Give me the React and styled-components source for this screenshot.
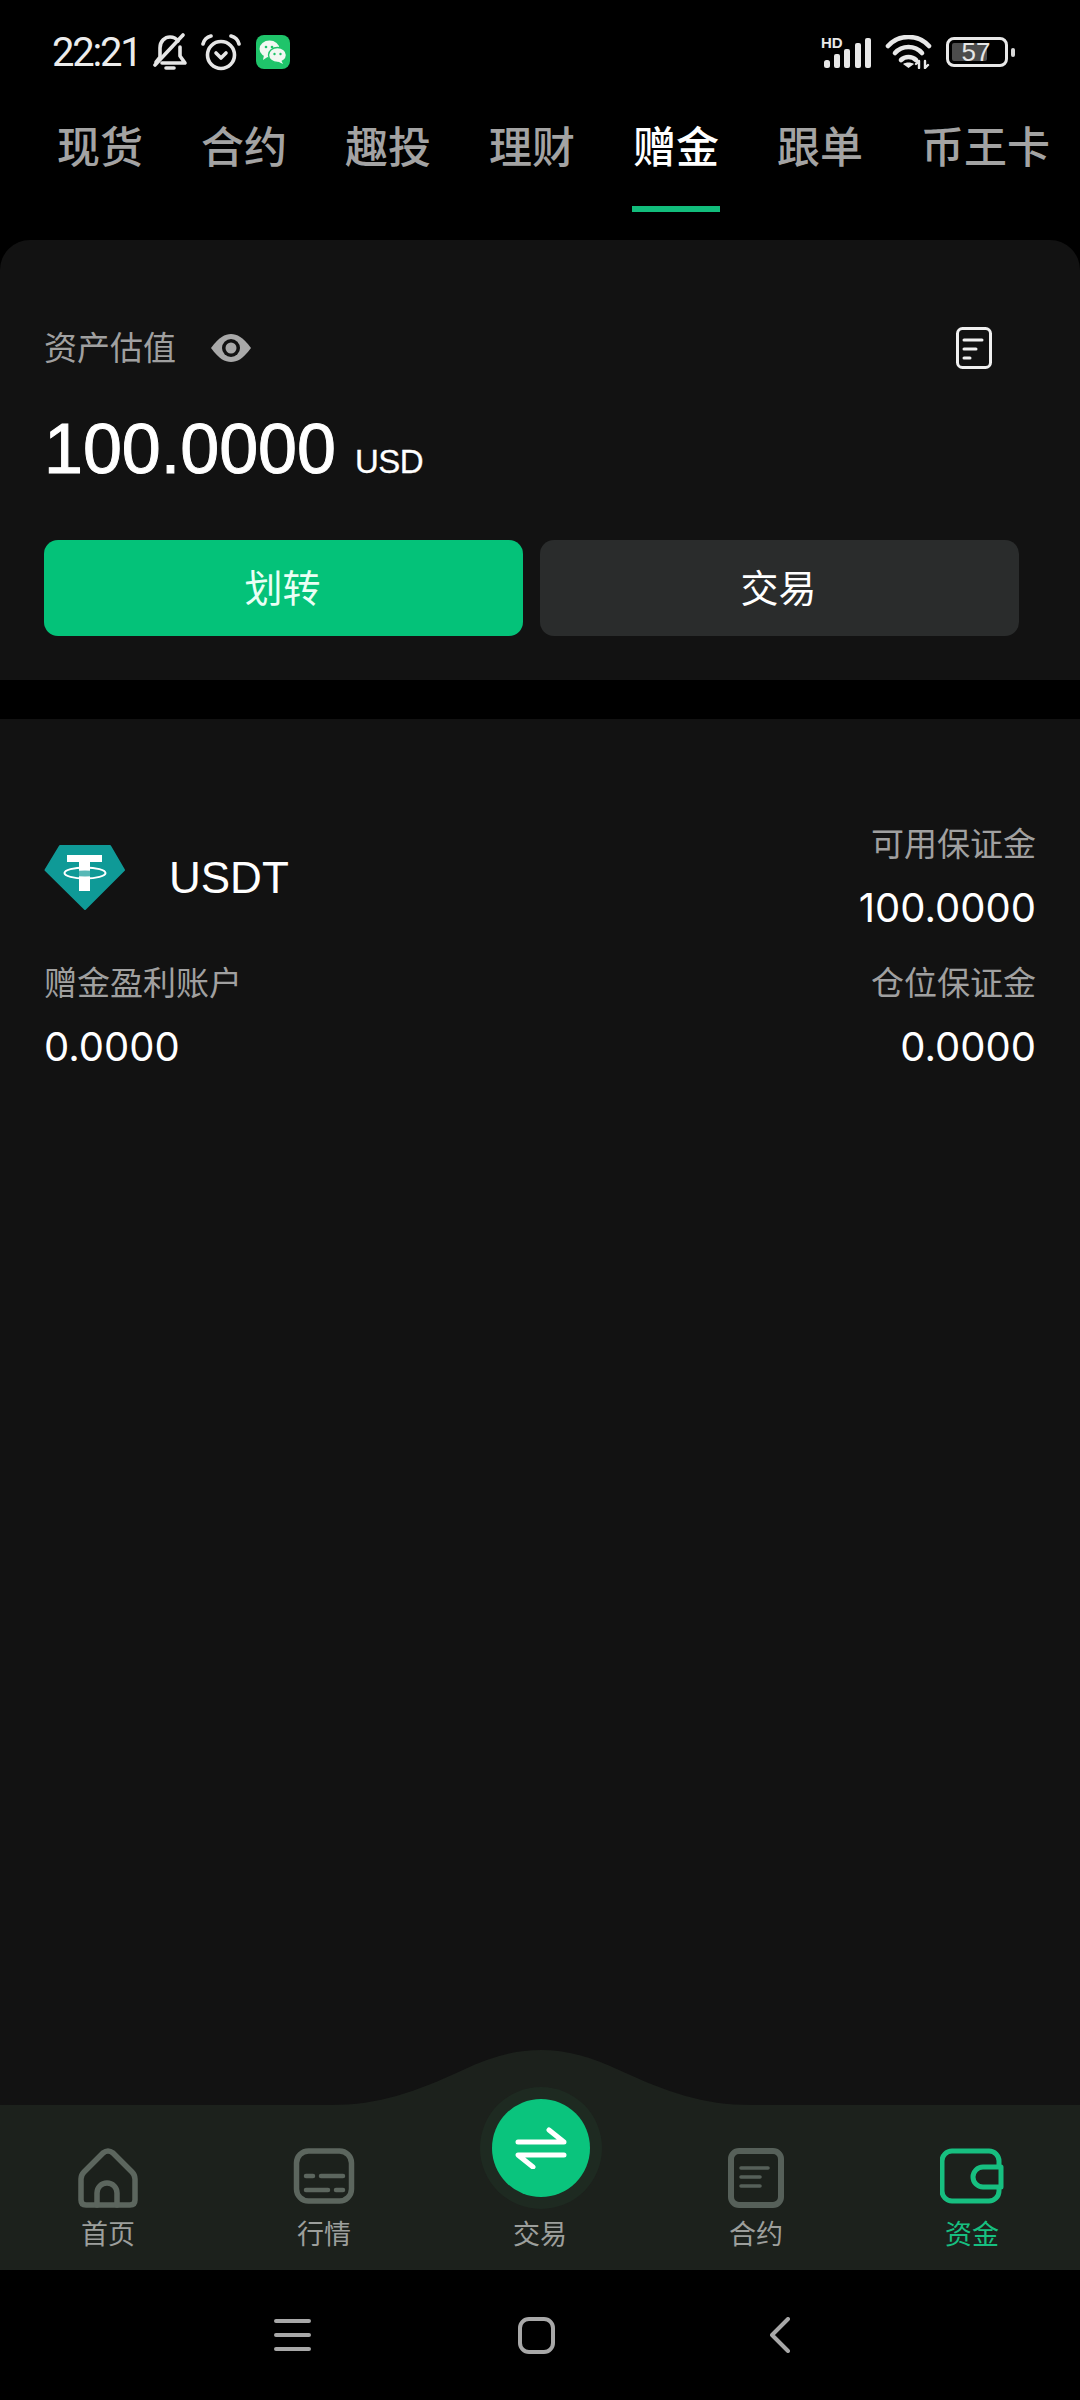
import React from 'react'
import styled, { createGlobalStyle } from 'styled-components'

const cjk = `"Noto Sans CJK SC", "Noto Sans", sans-serif`
const latin = `"Liberation Sans", Arial, sans-serif`

const GlobalStyle = createGlobalStyle`
  html, body {
    margin: 0;
    padding: 0;
    background: #000;
  }
  * { box-sizing: border-box; }
`

const Page = styled.div`
  width: 1080px;
  height: 2400px;
  display: flex;
  flex-direction: column;
  background: #000;
  overflow: hidden;
  font-family: ${cjk};
`

const StatusBar = styled.div`
  height: 104px;
  flex: none;
  display: flex;
  align-items: center;
  justify-content: space-between;
  padding: 0 65px 0 52px;
`

const StatusGroup = styled.div`
  display: flex;
  align-items: center;
  gap: ${p => p.$gap}px;
`

const Time = styled.span`
  flex: none;
  font-family: Roboto, sans-serif;
  font-size: 40px;
  letter-spacing: -2.2px;
  color: #ececec;
  width: 87px;
  white-space: nowrap;
`

const WechatBadge = styled.div`
  width: 34px;
  height: 34px;
  border-radius: 8px;
  background: #1fc46a;
  display: flex;
  align-items: center;
  justify-content: center;
  margin-left: 2px;
`

const Battery = styled.div`
  position: relative;
  width: 62px;
  height: 30px;
  border: 3px solid #e8e8e8;
  border-radius: 8px;
  margin-right: 7px;
  display: flex;
  align-items: center;
  justify-content: center;
  font-family: ${latin};
  font-size: 26px;
  line-height: 24px;
  color: #e6e6e6;
  &::before {
    content: '';
    position: absolute;
    left: 3px;
    top: 3px;
    bottom: 3px;
    width: 35px;
    border-radius: 2px;
    background: #4c4c4c;
  }
  &::after {
    content: '';
    position: absolute;
    right: -10px;
    top: 8px;
    width: 4px;
    height: 9px;
    border-radius: 2px;
    background: #d8d8d8;
  }
`

const BatteryLevel = styled.span`
  position: relative;
  z-index: 1;
  margin-right: 2px;
`

const TabRow = styled.div`
  height: 108px;
  flex: none;
  display: flex;
  gap: 56px;
  padding-left: 56px;
`

const Tab = styled.div`
  position: relative;
  padding: 0 1px;
  height: 108px;
  line-height: 80px;
  font-size: 43px;
  white-space: nowrap;
  font-weight: 500;
  color: ${p => (p.$active ? '#fff' : '#a3a3a3')};
  ${p => p.$active && `
    &::after {
      content: '';
      position: absolute;
      left: 0;
      right: 0;
      bottom: 0;
      height: 6px;
      background: #12bd7c;
    }
  `}
`

const AssetPanel = styled.section`
  flex: none;
  margin-top: 28px;
  background: #121212;
  border-radius: 30px 30px 0 0;
  padding: 87px 61px 44px 44px;
`

const AssetHead = styled.div`
  height: 41px;
  display: flex;
  align-items: center;
`

const MutedLabel = styled.span`
  display: block;
  font-size: 33px;
  line-height: 40px;
  padding-bottom: 4px;
  color: #a0a0a0;
  white-space: nowrap;
`

const EyeWrap = styled.span`
  display: flex;
  margin-left: 35px;
`

const DocWrap = styled.span`
  display: flex;
  margin-left: auto;
  margin-right: 27px;
`

const AmountRow = styled.div`
  margin-top: 46px;
  display: flex;
  align-items: baseline;
  gap: 19px;
  color: #fff;
  font-family: ${latin};
`

const Amount = styled.span`
  font-size: 70px;
  line-height: 70px;
  -webkit-text-stroke: 1px #fff;
`

const Unit = styled.span`
  font-size: 33px;
  letter-spacing: -0.5px;
  -webkit-text-stroke: 0.3px #fff;
`

const ButtonRow = styled.div`
  margin-top: 56px;
  display: flex;
  gap: 17px;
`

const ActionButton = styled.button`
  flex: 1;
  height: 96px;
  border: 0;
  padding: 0 2px 5px 0;
  border-radius: 14px;
  background: ${p => (p.$primary ? '#04c279' : '#2a2c2c')};
  color: ${p => (p.$primary ? '#eafff5' : '#fff')};
  font-family: ${cjk};
  font-size: 38px;
`

const AccountPanel = styled.section`
  flex: 1;
  margin-top: 39px;
  background: #121212;
  padding: 103px 44px 0;
  display: grid;
  grid-template-columns: 1fr 1fr;
  grid-auto-rows: min-content;
  row-gap: 31px;
`

const CoinCell = styled.div`
  display: flex;
  align-items: center;
  gap: 43px;
  padding-top: 3px;
`

const CoinName = styled.span`
  font-family: ${latin};
  font-size: 44px;
  color: #fff;
`

const Stat = styled.div`
  display: flex;
  flex-direction: column;
  gap: 20px;
  align-items: ${p => (p.$right ? 'flex-end' : 'flex-start')};
`

const StatValue = styled.span`
  font-family: Inter, "Noto Sans", sans-serif;
  font-size: 40px;
  line-height: 44px;
  color: #fff;
`

const TabBar = styled.nav`
  position: relative;
  flex: none;
  height: 165px;
  padding-top: 43px;
  background: #1c211c;
  display: grid;
  grid-template-columns: repeat(5, 216px);
`

const Hump = styled.svg`
  position: absolute;
  left: 50%;
  top: -55px;
  margin-left: -210px;
`

const NavItem = styled.div`
  display: flex;
  flex-direction: column;
  align-items: center;
  font-size: 27px;
  line-height: 36px;
  color: ${p => (p.$active ? '#17bf80' : '#9c9f9c')};
`

const NavIconSlot = styled.div`
  position: relative;
  width: 64px;
  height: 60px;
  margin-bottom: 7px;
  display: flex;
  justify-content: center;
`

const TradeRing = styled.div`
  position: absolute;
  left: 50%;
  top: -61px;
  margin-left: -60px;
  width: 122px;
  height: 122px;
  border-radius: 50%;
  background: #1e2a21;
  display: flex;
  align-items: center;
  justify-content: center;
`

const TradeCircle = styled.div`
  width: 98px;
  height: 98px;
  border-radius: 50%;
  background: #0ac47d;
  display: flex;
  align-items: center;
  justify-content: center;
`

const SystemNav = styled.div`
  height: 130px;
  flex: none;
  padding-left: 170px;
  display: grid;
  grid-template-columns: repeat(3, 244px);
  align-items: center;
  justify-items: center;
  background: #000;
`

const BellOff = () => (
  <svg width="36" height="38" viewBox="0 0 36 38" fill="none" stroke="#e6e6e6" strokeWidth="3.6" strokeLinecap="round" strokeLinejoin="round">
    <path d="M4 29 L8 24 V15 C8 8 13 4 18 4 C21 4 24 5 26 8" />
    <path d="M28 14 V23 L33 30 H10" />
    <path d="M31 2 L3 32" />
    <path d="M14 35 H22" />
  </svg>
)

const AlarmClock = () => (
  <svg width="40" height="37" viewBox="0 0 40 37" fill="none" stroke="#e6e6e6" strokeWidth="3.6" strokeLinecap="round" strokeLinejoin="round">
    <circle cx="20" cy="21" r="13.5" />
    <path d="M2 10 C3 6 6 3 10 2" />
    <path d="M38 10 C37 6 34 3 30 2" />
    <path d="M15 19 L20 24 L25 19" />
  </svg>
)

const WechatGlyph = () => (
  <svg width="28" height="26" viewBox="0 0 28 26">
    <ellipse cx="10.5" cy="10" rx="10" ry="8.5" fill="#f2f8f2" />
    <path d="M5 16 L4 21 L10 17Z" fill="#f2f8f2" />
    <ellipse cx="18.5" cy="16" rx="9" ry="7.5" fill="#f2f8f2" stroke="#1fc46a" strokeWidth="1.4" />
    <path d="M22 21 L24 25 L18 22Z" fill="#f2f8f2" />
    <circle cx="7" cy="8" r="1.3" fill="#1fc46a" />
    <circle cx="13" cy="8" r="1.3" fill="#1fc46a" />
    <circle cx="15.5" cy="15" r="1.2" fill="#1fc46a" />
    <circle cx="21.5" cy="15" r="1.2" fill="#1fc46a" />
  </svg>
)

const Signal = () => (
  <svg width="50" height="36" viewBox="0 -2 50 36">
    <text x="0" y="12" fontFamily="Liberation Sans" fontWeight="700" fontSize="15" fill="#e8e8e8">HD</text>
    <g fill="#e8e8e8">
      <rect x="3" y="24" width="6" height="8" rx="2.5" />
      <rect x="13" y="18" width="6" height="14" rx="2" />
      <rect x="23" y="13" width="6" height="19" rx="2" />
      <rect x="34" y="7" width="6" height="25" rx="2" />
      <rect x="44" y="2" width="6" height="30" rx="2" />
    </g>
  </svg>
)

const Wifi = () => (
  <svg width="47" height="34" viewBox="0 0 47 34" fill="none" stroke="#e8e8e8" strokeWidth="4.6" strokeLinecap="round">
    <path d="M3 11 C14 -1 33 -1 44 11" />
    <path d="M10 18 C17 10 30 10 37 18" />
    <path d="M16 25 C20 21 27 21 31 25" />
    <path d="M23.5 33 L18 29 C21 27 26 27 29 29Z" fill="#e8e8e8" stroke="none" />
    <path d="M34 33 V26 M31 29 L34 26" strokeWidth="2.4" />
    <path d="M40 26 V33 M43 30 L40 33" strokeWidth="2.4" />
  </svg>
)

const Eye = () => (
  <svg width="40" height="28" viewBox="0 0 40 28">
    <path d="M0 14 C8 3 14 0 20 0 C26 0 32 3 40 14 C32 25 26 28 20 28 C14 28 8 25 0 14Z" fill="#a9a9a9" />
    <circle cx="20" cy="14" r="9" fill="#121212" />
    <circle cx="20" cy="14" r="5.5" fill="#a9a9a9" />
  </svg>
)

const DocIcon = () => (
  <svg width="36" height="42" viewBox="0 0 36 42" fill="none" stroke="#f0f0f0" strokeLinecap="round">
    <rect x="1.5" y="1.5" width="33" height="39" rx="5" strokeWidth="3" />
    <path d="M8 13 H26 M8 22 H20 M8 31 H14" strokeWidth="3" />
  </svg>
)

const TetherLogo = () => (
  <svg width="82" height="66" viewBox="0 0 82 66">
    <path d="M16 1 H66 L80 25 L41 64 L1.5 25Z" fill="#0f9a97" stroke="#0f9a97" strokeWidth="2" strokeLinejoin="round" />
    <path d="M23 10 H58 V17 H46 V46 H35 V17 H23Z" fill="#fff" />
    <ellipse cx="41" cy="28" rx="20.5" ry="5.5" fill="none" stroke="#fff" strokeWidth="2" />
    <ellipse cx="41" cy="28.5" rx="17" ry="3" fill="#0f9a97" opacity="0.7" />
  </svg>
)

const HomeIcon = () => (
  <svg width="60" height="60" viewBox="0 0 60 60" fill="none" stroke="#5c665e" strokeWidth="5.5" strokeLinejoin="round" strokeLinecap="round">
    <path d="M25 5 Q30 1 35 5 L54 24 Q57 27 57 31 V52 Q57 57 52 57 H8 Q3 57 3 52 V31 Q3 27 6 24Z" />
    <path d="M19 57 V45 A10 10 0 0 1 39 45 V57" />
  </svg>
)

const MarketIcon = () => (
  <svg width="62" height="56" viewBox="0 0 62 56" fill="none" stroke="#5c665e" strokeLinecap="round">
    <rect x="3.5" y="3" width="55" height="50" rx="12" strokeWidth="5.5" />
    <path d="M13 28 H20 M28 28 H50 M13 42 H35 M43 42 H50" strokeWidth="4.5" />
  </svg>
)

const ContractIcon = () => (
  <svg width="56" height="60" viewBox="0 0 56 60" fill="none" stroke="#566059" strokeLinecap="round">
    <rect x="3" y="3" width="50" height="54" rx="8" strokeWidth="6" />
    <path d="M13 20 H40 M13 29 H32 M13 38 H32" strokeWidth="3.6" />
  </svg>
)

const WalletIcon = () => (
  <svg width="64" height="56" viewBox="1 0 64 56" fill="none" stroke="#17bf80" strokeWidth="5" strokeLinejoin="round">
    <path d="M60 19 V13 A10 10 0 0 0 50 3 H13 A10 10 0 0 0 3 13 V43 A10 10 0 0 0 13 53 H50 A10 10 0 0 0 60 43 V39" />
    <path d="M62 19 H44 A10 10 0 0 0 44 39 H62Z" />
  </svg>
)

const TradeArrows = () => (
  <svg width="52" height="42" viewBox="0 0 52 42" fill="none" stroke="#fff" strokeWidth="5" strokeLinecap="round" strokeLinejoin="round">
    <path d="M3 15 H49 L34 3" />
    <path d="M49 28 H3 L18 40" />
  </svg>
)

const MenuIcon = () => (
  <svg width="37" height="34" viewBox="0 0 37 34" stroke="#a8a8a8" strokeWidth="4" strokeLinecap="round">
    <path d="M2 3 H35 M2 17 H35 M2 31 H35" />
  </svg>
)

const SquareIcon = () => (
  <svg width="37" height="37" viewBox="0 0 37 37" fill="none" stroke="#a8a8a8" strokeWidth="4">
    <rect x="2" y="2" width="33" height="33" rx="9" />
  </svg>
)

const BackIcon = () => (
  <svg width="20" height="36" viewBox="0 0 20 36" fill="none" stroke="#a8a8a8" strokeWidth="4" strokeLinecap="round" strokeLinejoin="round">
    <path d="M18 2 L2 18 L18 34" />
  </svg>
)

const tabs = ['现货', '合约', '趣投', '理财', '赠金', '跟单', '币王卡']

const navItems = [
  { label: '首页', icon: <HomeIcon /> },
  { label: '行情', icon: <MarketIcon /> },
  {
    label: '交易',
    icon: (
      <TradeRing>
        <TradeCircle>
          <TradeArrows />
        </TradeCircle>
      </TradeRing>
    ),
  },
  { label: '合约', icon: <ContractIcon /> },
  { label: '资金', icon: <WalletIcon />, active: true },
]

export default function App() {
  return (
    <Page>
      <GlobalStyle />
      <StatusBar>
        <StatusGroup $gap={13}>
          <Time>22:21</Time>
          <BellOff />
          <AlarmClock />
          <WechatBadge>
            <WechatGlyph />
          </WechatBadge>
        </StatusGroup>
        <StatusGroup $gap={14}>
          <Signal />
          <Wifi />
          <Battery>
            <BatteryLevel>57</BatteryLevel>
          </Battery>
        </StatusGroup>
      </StatusBar>

      <TabRow>
        {tabs.map(t => (
          <Tab key={t} $active={t === '赠金'}>{t}</Tab>
        ))}
      </TabRow>

      <AssetPanel>
        <AssetHead>
          <MutedLabel>资产估值</MutedLabel>
          <EyeWrap><Eye /></EyeWrap>
          <DocWrap><DocIcon /></DocWrap>
        </AssetHead>
        <AmountRow>
          <Amount>100.0000</Amount>
          <Unit>USD</Unit>
        </AmountRow>
        <ButtonRow>
          <ActionButton $primary>划转</ActionButton>
          <ActionButton>交易</ActionButton>
        </ButtonRow>
      </AssetPanel>

      <AccountPanel>
        <CoinCell>
          <TetherLogo />
          <CoinName>USDT</CoinName>
        </CoinCell>
        <Stat $right>
          <MutedLabel>可用保证金</MutedLabel>
          <StatValue>100.0000</StatValue>
        </Stat>
        <Stat>
          <MutedLabel>赠金盈利账户</MutedLabel>
          <StatValue>0.0000</StatValue>
        </Stat>
        <Stat $right>
          <MutedLabel>仓位保证金</MutedLabel>
          <StatValue>0.0000</StatValue>
        </Stat>
      </AccountPanel>

      <TabBar>
        <Hump width="422" height="56" viewBox="0 0 422 56">
          <path d="M0 56 V55 C50 55 85 42 133 20 C160 7 185 0 211 0 C237 0 262 7 289 20 C337 42 372 55 422 55 V56Z" fill="#1c211c" />
        </Hump>
        {navItems.map(item => (
          <NavItem key={item.label} $active={item.active}>
            <NavIconSlot>{item.icon}</NavIconSlot>
            {item.label}
          </NavItem>
        ))}
      </TabBar>

      <SystemNav>
        <MenuIcon />
        <SquareIcon />
        <BackIcon />
      </SystemNav>
    </Page>
  )
}
